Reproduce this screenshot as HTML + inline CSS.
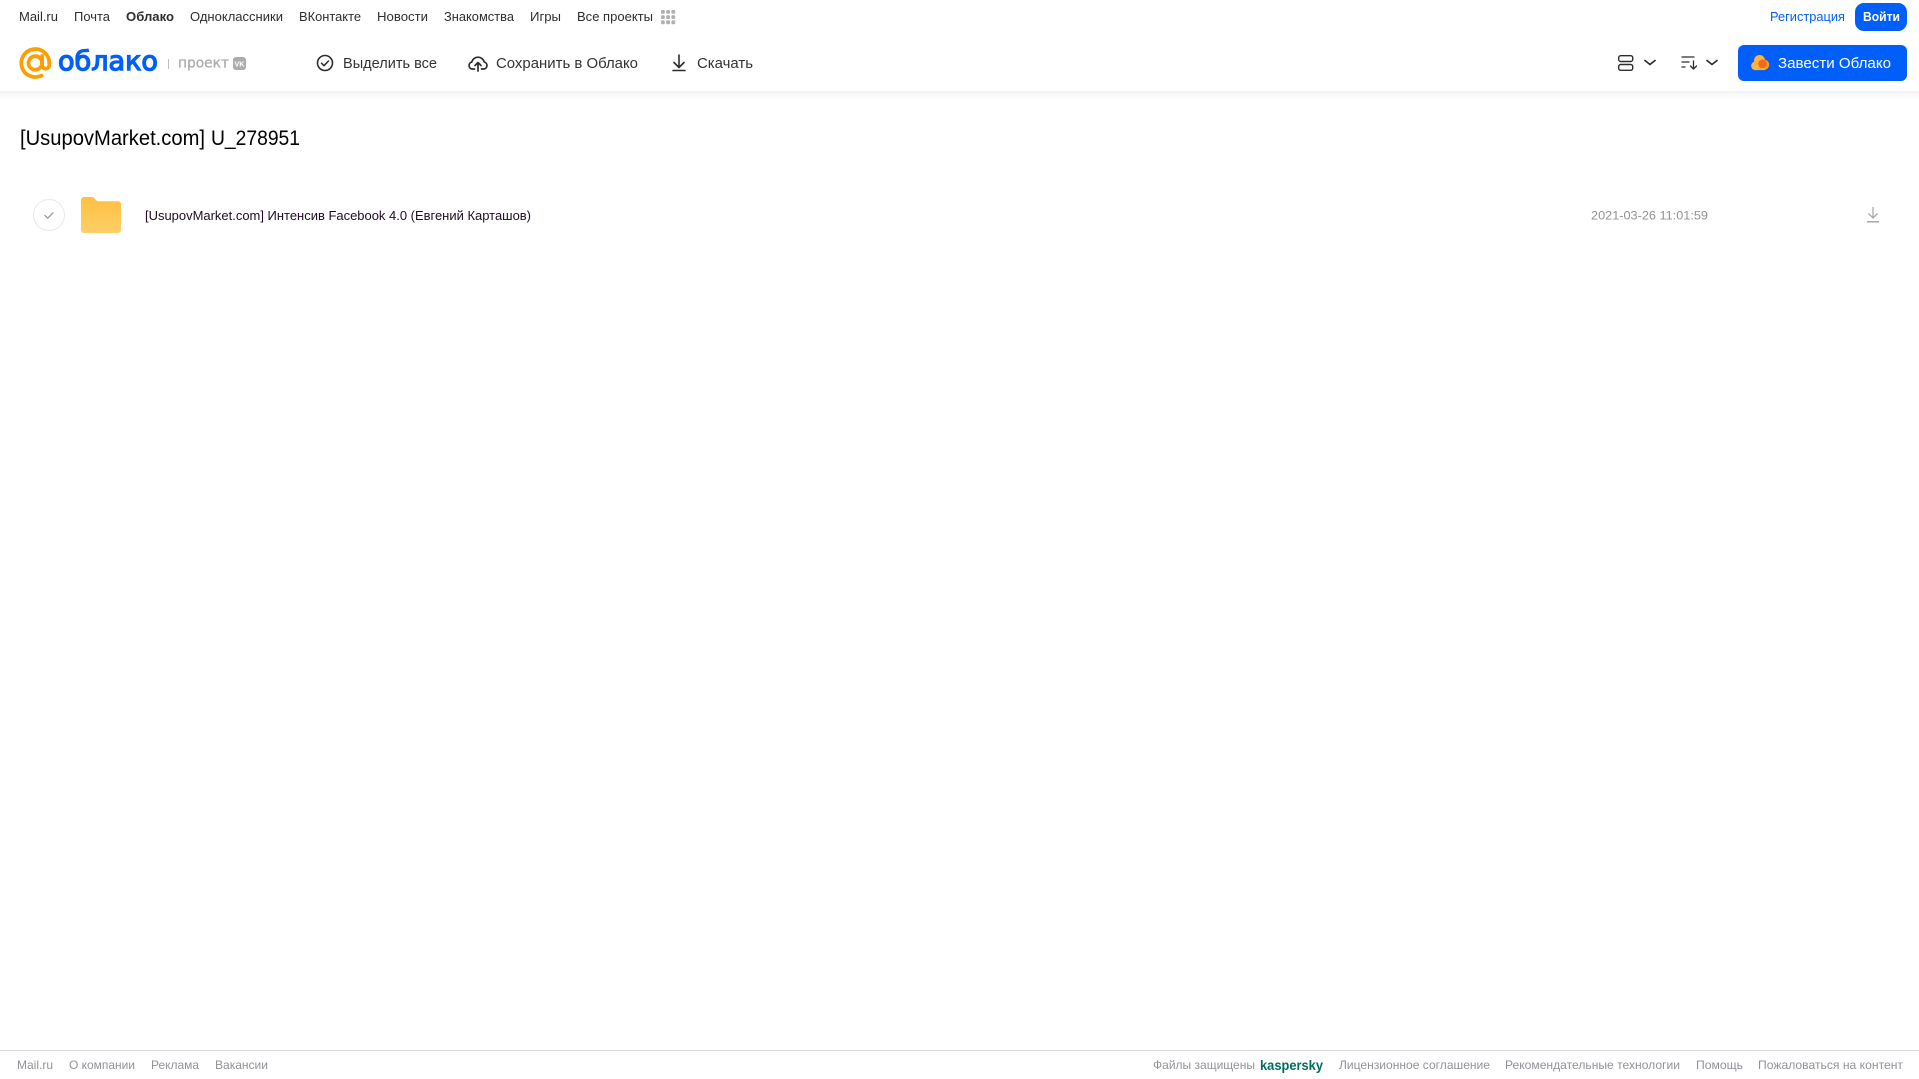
<!DOCTYPE html>
<html lang="ru">
<head>
<meta charset="utf-8">
<title>Облако</title>
<style>
html,body{margin:0;padding:0;background:#fff;width:1919px;height:1079px;overflow:hidden}
svg{position:absolute;left:0;top:0;display:block}
text{font-family:"Liberation Sans",sans-serif;white-space:pre}
.n{font-size:13px;fill:#2c2d2e}
.a{font-size:15px;fill:#333}
.f{font-size:12px;fill:#919399}
</style>
</head>
<body>
<svg width="1919" height="1079" viewBox="0 0 1919 1079" xmlns="http://www.w3.org/2000/svg">
<defs>
<linearGradient id="sh" x1="0" y1="0" x2="0" y2="1"><stop offset="0" stop-color="#f2f2f2"/><stop offset="1" stop-color="#fff"/></linearGradient>
<linearGradient id="fo" x1="0" y1="0" x2="0" y2="1"><stop offset="0" stop-color="#ffbf42"/><stop offset="1" stop-color="#ffcf66"/></linearGradient>
</defs>
<rect x="0" y="91" width="1919" height="8" fill="url(#sh)"/>

<!-- top nav -->
<text class="n" x="19" y="21" textLength="39" lengthAdjust="spacingAndGlyphs">Mail.ru</text>
<text class="n" x="74" y="21" textLength="36" lengthAdjust="spacingAndGlyphs">Почта</text>
<text class="n" x="126" y="21" textLength="48" lengthAdjust="spacingAndGlyphs" font-weight="700">Облако</text>
<text class="n" x="190" y="21" textLength="93" lengthAdjust="spacingAndGlyphs">Одноклассники</text>
<text class="n" x="299" y="21" textLength="62" lengthAdjust="spacingAndGlyphs">ВКонтакте</text>
<text class="n" x="377" y="21" textLength="51" lengthAdjust="spacingAndGlyphs">Новости</text>
<text class="n" x="444" y="21" textLength="70" lengthAdjust="spacingAndGlyphs">Знакомства</text>
<text class="n" x="530" y="21" textLength="31" lengthAdjust="spacingAndGlyphs">Игры</text>
<text class="n" x="577" y="21" textLength="76" lengthAdjust="spacingAndGlyphs">Все проекты</text>
<g fill="#b0b0b0">
<rect x="661" y="10" width="3.800" height="3.800" rx="1"/><rect x="666.200" y="10" width="3.800" height="3.800" rx="1"/><rect x="671.400" y="10" width="3.800" height="3.800" rx="1"/>
<rect x="661" y="15.200" width="3.800" height="3.800" rx="1"/><rect x="666.200" y="15.200" width="3.800" height="3.800" rx="1"/><rect x="671.400" y="15.200" width="3.800" height="3.800" rx="1"/>
<rect x="661" y="20.400" width="3.800" height="3.800" rx="1"/><rect x="666.200" y="20.400" width="3.800" height="3.800" rx="1"/><rect x="671.400" y="20.400" width="3.800" height="3.800" rx="1"/>
</g>
<text x="1770" y="21" textLength="75" lengthAdjust="spacingAndGlyphs" font-size="13" style="fill:#005ff9">Регистрация</text>
<rect x="1855" y="3" width="52" height="28" rx="9" fill="#005ff9"/>
<text x="1863" y="21" textLength="37" lengthAdjust="spacingAndGlyphs" font-size="13" font-weight="700" style="fill:#fff">Войти</text>

<!-- logo -->
<g fill="none" stroke="#ff9e00" stroke-width="3.800">
<circle cx="35.300" cy="63" r="6.800"/>
<path d="M42.100 56V65a3.600 3.600 0 0 0 7.200 0V63A14 14 0 1 0 41.500 75.600" stroke-linecap="round"/>
</g>
<text x="58" y="70" textLength="100" lengthAdjust="spacingAndGlyphs" font-size="27" style="font-family:'DejaVu Sans',sans-serif;fill:#005ff9;stroke:#005ff9;stroke-width:1.300">облако</text>
<rect x="168" y="59" width="1" height="10" fill="#c0c0c0"/>
<text x="178" y="67.500" textLength="51" lengthAdjust="spacingAndGlyphs" font-size="14" style="font-family:'DejaVu Sans',sans-serif;fill:#adadad;stroke:#adadad;stroke-width:.3">проект</text>
<rect x="233" y="57" width="13" height="13" rx="3" fill="#adadad"/>
<text x="234.500" y="66.500" textLength="10" lengthAdjust="spacingAndGlyphs" font-size="7.500" font-weight="700" style="fill:#fff">VK</text>

<!-- actions -->
<circle cx="325" cy="63" r="7.500" fill="none" stroke="#2c2d2e" stroke-width="1.600"/>
<path d="M321.500 63.200l2.500 2.500 4.500-4.700" fill="none" stroke="#2c2d2e" stroke-width="1.500" stroke-linecap="round" stroke-linejoin="round"/>
<text class="a" x="343" y="68" textLength="94" lengthAdjust="spacingAndGlyphs">Выделить все</text>

<path d="M474.500 69h-2a3.500 3.500 0 0 1 -.8 -6.900a6.500 6.500 0 0 1 12.600 0a3.500 3.500 0 0 1 -.8 6.900h-2" fill="none" stroke="#2c2d2e" stroke-width="1.700" stroke-linecap="round" stroke-linejoin="round"/>
<path d="M478 71v-8M475 65.500l3-3 3 3" fill="none" stroke="#2c2d2e" stroke-width="1.700" stroke-linecap="round" stroke-linejoin="round"/>
<text class="a" x="496" y="68" textLength="142" lengthAdjust="spacingAndGlyphs">Сохранить в Облако</text>

<path d="M679 55v12M674 62.500l5 5 5-5M673 70.500h12" fill="none" stroke="#2c2d2e" stroke-width="1.600" stroke-linecap="round" stroke-linejoin="round"/>
<text class="a" x="697" y="68" textLength="56" lengthAdjust="spacingAndGlyphs">Скачать</text>

<!-- right controls -->
<rect x="1618.700" y="55.700" width="14" height="5.800" rx="2" fill="none" stroke="#2c2d2e" stroke-width="1.400"/>
<rect x="1618.700" y="64.500" width="14" height="5.800" rx="2" fill="none" stroke="#2c2d2e" stroke-width="1.400"/>
<path d="M1645 60.500l5 4 5-4" fill="none" stroke="#2c2d2e" stroke-width="1.700" stroke-linecap="round" stroke-linejoin="round"/>
<path d="M1681.500 57h13M1681.500 62h8M1681.500 67h4" fill="none" stroke="#2c2d2e" stroke-width="1.200"/>
<path d="M1693.500 61v7.500M1690.500 66l3 3 3-3" fill="none" stroke="#2c2d2e" stroke-width="1.300" stroke-linecap="round" stroke-linejoin="round"/>
<path d="M1707 60.500l5 4 5-4" fill="none" stroke="#2c2d2e" stroke-width="1.700" stroke-linecap="round" stroke-linejoin="round"/>
<rect x="1738" y="45" width="169" height="36" rx="6" fill="#005ff9"/>
<g>
<circle cx="1759.500" cy="60.500" r="5.500" fill="#ffb13d"/>
<circle cx="1755.500" cy="65.800" r="4.400" fill="#ffb13d"/>
<circle cx="1764" cy="64.800" r="5.200" fill="#ff9a1f"/>
<rect x="1755.500" y="64" width="9" height="6.100" fill="#ffb13d"/>
<circle cx="1762.500" cy="63.800" r="4.300" fill="#f2691c"/>
</g>
<text x="1778" y="68" textLength="113" lengthAdjust="spacingAndGlyphs" font-size="15" style="fill:#fff">Завести Облако</text>

<!-- title -->
<text x="20" y="145" textLength="185" lengthAdjust="spacingAndGlyphs" font-size="21" style="fill:#000">[UsupovMarket.com]</text>
<text x="211" y="145" textLength="89" lengthAdjust="spacingAndGlyphs" font-size="21" style="fill:#000">U_278951</text>

<!-- row -->
<circle cx="49" cy="215" r="15.500" fill="#fff" stroke="#e9e9e9"/>
<path d="M45 215.500l2.700 2.700 5.300-5.400" fill="none" stroke="#999" stroke-width="1.300" stroke-linecap="round" stroke-linejoin="round"/>
<path d="M81 200a3 3 0 0 1 3-3h8a3 3 0 0 1 2.200 1l2.300 2.500a2 2 0 0 0 1.500.7h20a3 3 0 0 1 3 3v25.800a3 3 0 0 1 -3 3h-34a3 3 0 0 1 -3 -3z" fill="url(#fo)"/>
<rect x="81" y="205" width="40" height="1" fill="#ffc64f"/>
<text x="145" y="220" textLength="386" lengthAdjust="spacingAndGlyphs" font-size="13" style="fill:#200a24">[UsupovMarket.com] Интенсив Facebook 4.0 (Евгений Карташов)</text>
<text x="1591" y="219.500" textLength="117" lengthAdjust="spacingAndGlyphs" font-size="12" style="fill:#929292">2021-03-26 11:01:59</text>
<path d="M1873 207v11M1868.500 213.500l4.500 4.500 4.500-4.500" fill="none" stroke="#a8a8a8" stroke-width="1.300"/>
<rect x="1867" y="221" width="12" height="1.500" fill="#a8a8a8"/>

<!-- footer -->
<rect x="0" y="1050" width="1919" height="1" fill="#d9d9d9"/>
<text class="f" x="17" y="1069" textLength="36" lengthAdjust="spacingAndGlyphs">Mail.ru</text>
<text class="f" x="69" y="1069" textLength="66" lengthAdjust="spacingAndGlyphs">О компании</text>
<text class="f" x="151" y="1069" textLength="48" lengthAdjust="spacingAndGlyphs">Реклама</text>
<text class="f" x="215" y="1069" textLength="53" lengthAdjust="spacingAndGlyphs">Вакансии</text>
<text class="f" x="1153" y="1069" textLength="102" lengthAdjust="spacingAndGlyphs">Файлы защищены</text>
<text x="1260" y="1070" textLength="63" lengthAdjust="spacingAndGlyphs" font-size="14" font-weight="700" style="fill:#006d5c">kaspersky</text>
<text class="f" x="1339" y="1069" textLength="151" lengthAdjust="spacingAndGlyphs">Лицензионное соглашение</text>
<text class="f" x="1505" y="1069" textLength="175" lengthAdjust="spacingAndGlyphs">Рекомендательные технологии</text>
<text class="f" x="1696" y="1069" textLength="47" lengthAdjust="spacingAndGlyphs">Помощь</text>
<text class="f" x="1758" y="1069" textLength="145" lengthAdjust="spacingAndGlyphs">Пожаловаться на контент</text>
</svg>
</body>
</html>
